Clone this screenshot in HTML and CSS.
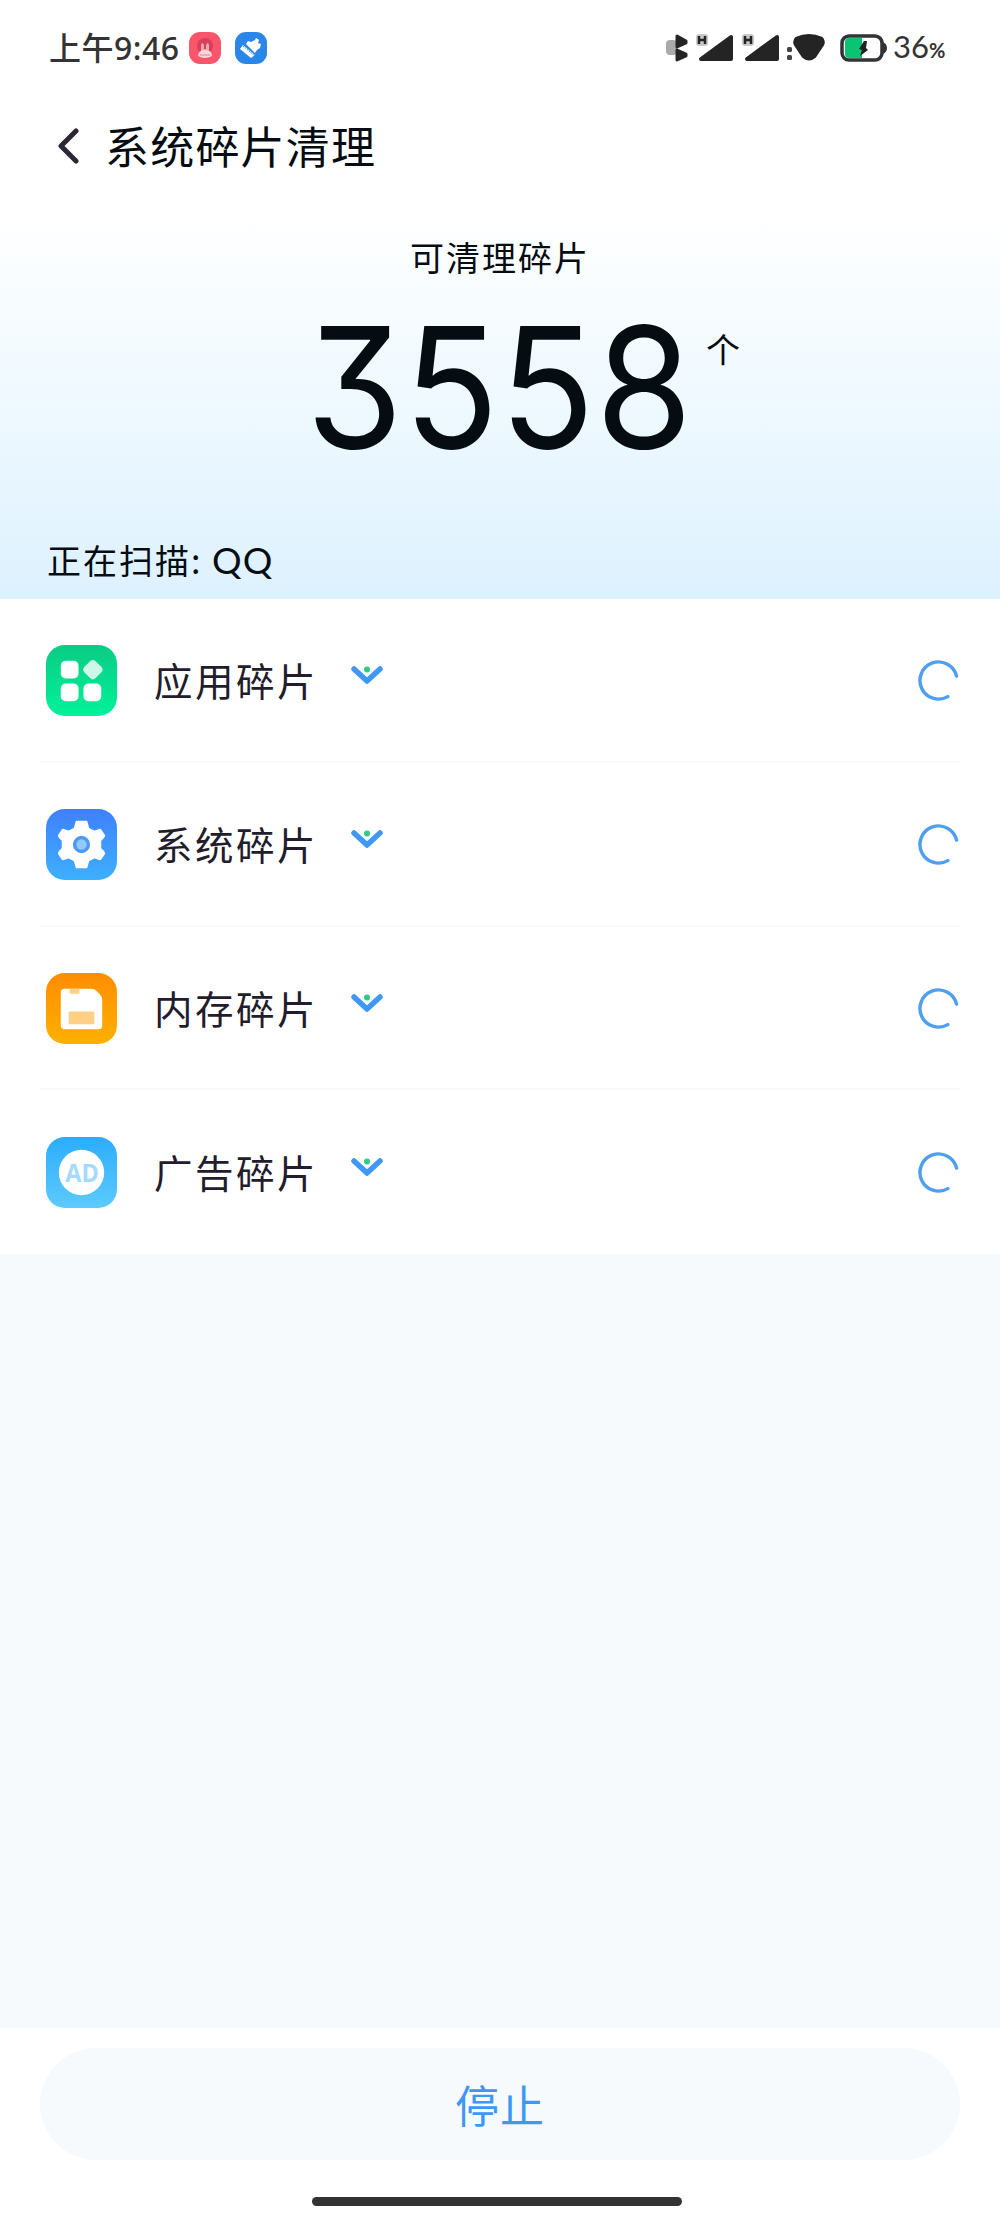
FILE: index.html
```html
<!DOCTYPE html>
<html lang="zh-CN">

    <head>
        <meta charset="utf-8">
        <title>系统碎片清理</title>
        <link rel="stylesheet" href="styles.css">
    </head>

    <body>
        <!-- Status bar -->
        <div class="statusBar">
            <span class="time">上午9:46</span>
            <svg class="appIcon" viewBox="0 0 32 32">
                <rect width="32" height="32" rx="11" fill="#f9556b"/>
                <circle cx="16" cy="14" r="8" fill="#d8405a"/>
                <path d="M12 20V13q1-4 3 0v4h2v-4q2-4 3 0v7" fill="#f0a4ad"/>
                <path d="M9 24q0-6 7-6t7 6q-7 4-14 0z" fill="#ffd5da"/>
                <path d="M11 23h10" stroke="#e78292" stroke-width="1"/>
            </svg>
            <svg class="appIcon second" viewBox="0 0 32 32">
                <rect width="32" height="32" rx="11" fill="#2a86e8"/>
                <path d="M11 12l2-3 3 1 4-2 1-2 3 2-1 3 3 1-1 4-3 2-2 3-9-9zM8 13l12 10-4 3-11-9z" fill="#fff"/>
                <path d="M8 14l12 10" stroke="#2a86e8" stroke-width="1" stroke-dasharray="1.500 1"/>
            </svg>
            <svg class="signals" width="162" height="32" viewBox="0 0 162 32">
                <rect x="1" y="8" width="11" height="15" rx="4" fill="#aaa"/>
                <path d="M12 4l9 5v2l-9 4zM12 18l9 4v2l-9 4z" fill="#242424" stroke="#242424" stroke-width="3" stroke-linejoin="round"/>
                <path d="M36 27L66 5v22z" fill="#242424" stroke="#242424" stroke-width="4" stroke-linejoin="round"/>
                <path d="M82 27l30-22v22z" fill="#242424" stroke="#242424" stroke-width="4" stroke-linejoin="round"/>
                <rect x="31" y="2" width="12" height="12" rx="3" fill="#c8c8c8"/>
                <path d="M34 4v8M40 4v8M34 8h6" stroke="#242424" stroke-width="2.5"/>
                <rect x="77" y="2" width="12" height="12" rx="3" fill="#c8c8c8"/>
                <path d="M80 4v8M86 4v8M80 8h6" stroke="#242424" stroke-width="2.5"/>
                <rect x="122" y="15" width="5" height="5" rx="1.5" fill="#444"/>
                <rect x="122" y="23" width="5" height="5" rx="1.5" fill="#444"/>
                <path d="M131 6q13-6 26 0 3 3 1 7l-8 12q-6 5-12 0l-8-12q-2-4 1-7z" fill="#242424" stroke="#242424" stroke-width="2"/>
            </svg>
            <svg class="battery" width="47" height="30" viewBox="0 0 47 30">
                <path d="M43 9q4 2 4 6t-4 6z" fill="#333"/>
                <rect x="2" y="3" width="40" height="24" rx="7" fill="#fff" stroke="#333" stroke-width="3.5"/>
                <path d="M9 5h13v20H9q-4 0-4-4V9q0-4 4-4z" fill="#0bc473"/>
                <path d="M24 8l-5 8 3 1-2 6 8-6-2-2 1-7z" fill="#222"/>
            </svg>
            <span class="percent">36<small>%</small></span>
        </div>

        <!-- Title -->
        <div class="header">
            <svg class="back" width="22" height="38" viewBox="0 0 22 38">
                <path d="M19 4L4 19l15 15" fill="none" stroke="#2c2635" stroke-width="5" stroke-linecap="round" stroke-linejoin="round"/>
            </svg>
            <h1>系统碎片清理</h1>
        </div>

        <div class="summary">
            <p class="caption">可清理碎片</p>
            <div class="total">
                <span class="number">3558</span>
                <span class="unit">个</span>
            </div>
            <p class="scanning">正在扫描: <span class="appName">QQ</span></p>
        </div>

        <!-- Categories -->
        <ul class="list">
            <li>
                <svg class="icon" viewBox="0 0 72 72">
                    <defs><linearGradient id="green" x2="0" y2="1"><stop stop-color="#0bcb84"/><stop offset="1" stop-color="#00f29b"/></linearGradient></defs>
                    <rect width="72" height="72" rx="19" fill="url(#green)"/>
                    <g fill="#fff">
                        <rect x="15" y="16" width="18" height="18" rx="5"/>
                        <rect x="15" y="39" width="18" height="18" rx="5"/>
                        <rect x="38" y="39" width="18" height="18" rx="5"/>
                        <rect x="39.500" y="17" width="16" height="16" rx="4" opacity=".8" transform="rotate(45 47.5 25)"/>
                    </g>
                </svg>
                <span class="label">应用碎片</span>
                <svg class="arrow" viewBox="0 0 32 22"><path d="M3 4l13 12L29 4" /><circle cx="16" cy="4.500" r="3"/></svg>
                <svg class="spinner" viewBox="0 0 44 44"><path d="M40.500 17.500A19 19 0 1 0 31.500 38.500"/></svg>
            </li>
            <li>
                <svg class="icon" viewBox="0 0 72 72">
                    <defs><linearGradient id="blue" x2="0" y2="1"><stop stop-color="#3f80ff"/><stop offset="1" stop-color="#3db0ff"/></linearGradient></defs>
                    <rect width="72" height="72" rx="19" fill="url(#blue)"/>
                    <path d="M31 13h10l2 7 6 3 6-2 4 6-1 2q-3 2-3 4v6q0 2 3 4l1 2-4 6-6-2-6 3-2 7H31l-2-7-6-3-6 2-4-6 1-2q3-2 3-4v-6q0-2-3-4l-1-2 4-6 6 2 6-3z" fill="#fff" stroke="#fff" stroke-width="2" stroke-linejoin="round"/>
                    <circle cx="36" cy="36" r="7" fill="#90c9fa" stroke="#4d9bef" stroke-width="3.500"/>
                </svg>
                <span class="label">系统碎片</span>
                <svg class="arrow" viewBox="0 0 32 22"><path d="M3 4l13 12L29 4" /><circle cx="16" cy="4.500" r="3"/></svg>
                <svg class="spinner" viewBox="0 0 44 44"><path d="M40.500 17.500A19 19 0 1 0 31.500 38.500"/></svg>
            </li>
            <li>
                <svg class="icon" viewBox="0 0 72 72">
                    <defs><linearGradient id="orange" x2="0" y2="1"><stop stop-color="#ff8d00"/><stop offset="1" stop-color="#ffb000"/></linearGradient></defs>
                    <rect width="72" height="72" rx="19" fill="url(#orange)"/>
                    <path d="M19 16h27q3 0 5 2l4 4q2 2 2 5v26q0 4-4 4H19q-4 0-4-4V20q0-4 4-4z" fill="#fff"/>
                    <path d="M24 16h10v4q0 1-1 1h-8q-1 0-1-1z" fill="#ffd08a"/>
                    <rect x="23" y="39" width="26" height="13" rx="1" fill="#ffcf83"/>
                </svg>
                <span class="label">内存碎片</span>
                <svg class="arrow" viewBox="0 0 32 22"><path d="M3 4l13 12L29 4" /><circle cx="16" cy="4.500" r="3"/></svg>
                <svg class="spinner" viewBox="0 0 44 44"><path d="M40.500 17.500A19 19 0 1 0 31.500 38.500"/></svg>
            </li>
            <li>
                <svg class="icon" viewBox="0 0 72 72">
                    <defs><linearGradient id="sky" x2="0" y2="1"><stop stop-color="#2dacfc"/><stop offset="1" stop-color="#5ccbff"/></linearGradient></defs>
                    <rect width="72" height="72" rx="19" fill="url(#sky)"/>
                    <circle cx="36" cy="36" r="23" fill="#fff"/>
                    <text class="ad" x="36.500" y="45.500" text-anchor="middle" textLength="34" lengthAdjust="spacingAndGlyphs">AD</text>
                </svg>
                <span class="label">广告碎片</span>
                <svg class="arrow" viewBox="0 0 32 22"><path d="M3 4l13 12L29 4" /><circle cx="16" cy="4.500" r="3"/></svg>
                <svg class="spinner" viewBox="0 0 44 44"><path d="M40.500 17.500A19 19 0 1 0 31.500 38.500"/></svg>
            </li>
        </ul>

        <div class="footer">
            <button class="stop">停止</button>
            <div class="homeBar"></div>
        </div>
    </body>

</html>
```
FILE: styles.css
```css
* {
    box-sizing: border-box;
}
body {
    margin: 0;
    height: 2222px;
    display: flex;
    flex-direction: column;
    background-color: #f6fafd;
    font-family: "Noto Sans CJK SC", sans-serif;
    color: #050c12;
}
h1, p, ul {
    margin: 0;
    padding: 0;
    font-weight: 400;
}
svg {
    display: block;
    flex: none;
}
.statusBar {
    height: 96px;
    padding: 0 54px 0 49px;
    display: flex;
    align-items: center;
    background-color: #fff;
    color: #333;
}
.time {
    width: 140px;
    font-family: "Noto Sans", "Noto Sans CJK SC", sans-serif;
    font-size: 32px;
    font-weight: 500;
    line-height: 40px;
    letter-spacing: 0.5px;
    white-space: nowrap;
}
.appIcon {
    width: 32px;
    height: 32px;
}
.second {
    margin-left: 14px;
}
.signals {
    margin-left: auto;
}
.battery {
    margin-left: 13px;
}
.percent {
    width: 53px;
    margin-left: 6px;
    font-family: Lato, sans-serif;
    font-size: 31px;
    line-height: 40px;
    white-space: nowrap;
}
.percent small {
    font-size: 20px;
    font-weight: 700;
}
.header {
    height: 117px;
    padding: 0 0 20px 57px;
    display: flex;
    align-items: center;
    background-color: #fff;
}
.back {
    margin-top: 2px;
}
h1 {
    margin-left: 26px;
    font-size: 44px;
    line-height: 60px;
    letter-spacing: 1.2px;
}
.summary {
    height: 386px;
    padding-top: 19px;
    background: linear-gradient(#fff, #f2faff 40%, #ddf1fe);
}
.caption {
    font-size: 34px;
    line-height: 50px;
    letter-spacing: 2px;
    text-align: center;
}
.total {
    height: 253px;
    padding: 7px 0 0 306px;
    display: flex;
    align-items: flex-start;
}
.number {
    width: 394px;
    font-family: Inter, sans-serif;
    font-size: 168px;
    font-weight: 400;
    font-feature-settings: "cv09";
    line-height: 196px;
    letter-spacing: 1px;
    transform: scaleX(0.93);
    transform-origin: left;
}
.unit {
    margin-top: 35px;
    margin-left: 6px;
    font-size: 34px;
    line-height: 50px;
}
.scanning {
    padding-left: 47px;
    font-size: 34px;
    line-height: 50px;
    letter-spacing: 2px;
}
.appName {
    font-family: Lato, sans-serif;
    font-size: 37px;
    letter-spacing: 1px;
}
.list {
    list-style-type: none;
    background-color: #fff;
}
.list li {
    height: 163.75px;
    margin: 0 40px;
    padding: 2px 0 0 6px;
    display: flex;
    align-items: center;
    border-bottom: 2px solid #f8f9fa;
}
.list li:last-child {
    border-bottom-color: #fff;
}
.icon {
    width: 71px;
    height: 71px;
}
.label {
    width: 197px;
    margin-left: 37px;
    margin-bottom: 3px;
    font-size: 38.5px;
    line-height: 56px;
    letter-spacing: 2.5px;
    color: #221c2c;
}
.arrow {
    width: 32px;
    height: 22px;
    margin-bottom: 9px;
}
.arrow path {
    fill: none;
    stroke: #3f98f3;
    stroke-width: 5.5;
    stroke-linecap: round;
    stroke-linejoin: round;
}
.arrow circle {
    fill: #2dcb83;
}
.spinner {
    width: 43px;
    height: 43px;
    margin-left: auto;
}
.spinner path {
    fill: none;
    stroke: #4f9fee;
    stroke-width: 3.5;
    stroke-linecap: round;
}
.ad {
    font-family: "Open Sans", sans-serif;
    font-size: 26px;
    font-weight: 700;
    fill: #a4dafb;
}
.footer {
    height: 194px;
    margin-top: auto;
    padding: 20px 40px 0;
    background-color: #fff;
}
.stop {
    display: block;
    width: 100%;
    height: 112px;
    border: none;
    border-radius: 56px;
    background-color: #f7fafd;
    color: #3d98f3;
    font-family: "Noto Sans CJK SC", sans-serif;
    font-size: 44px;
    letter-spacing: 1px;
}
.homeBar {
    width: 370px;
    height: 9px;
    margin: 37px 0 0 272px;
    border-radius: 5px;
    background-color: #333;
}
```
